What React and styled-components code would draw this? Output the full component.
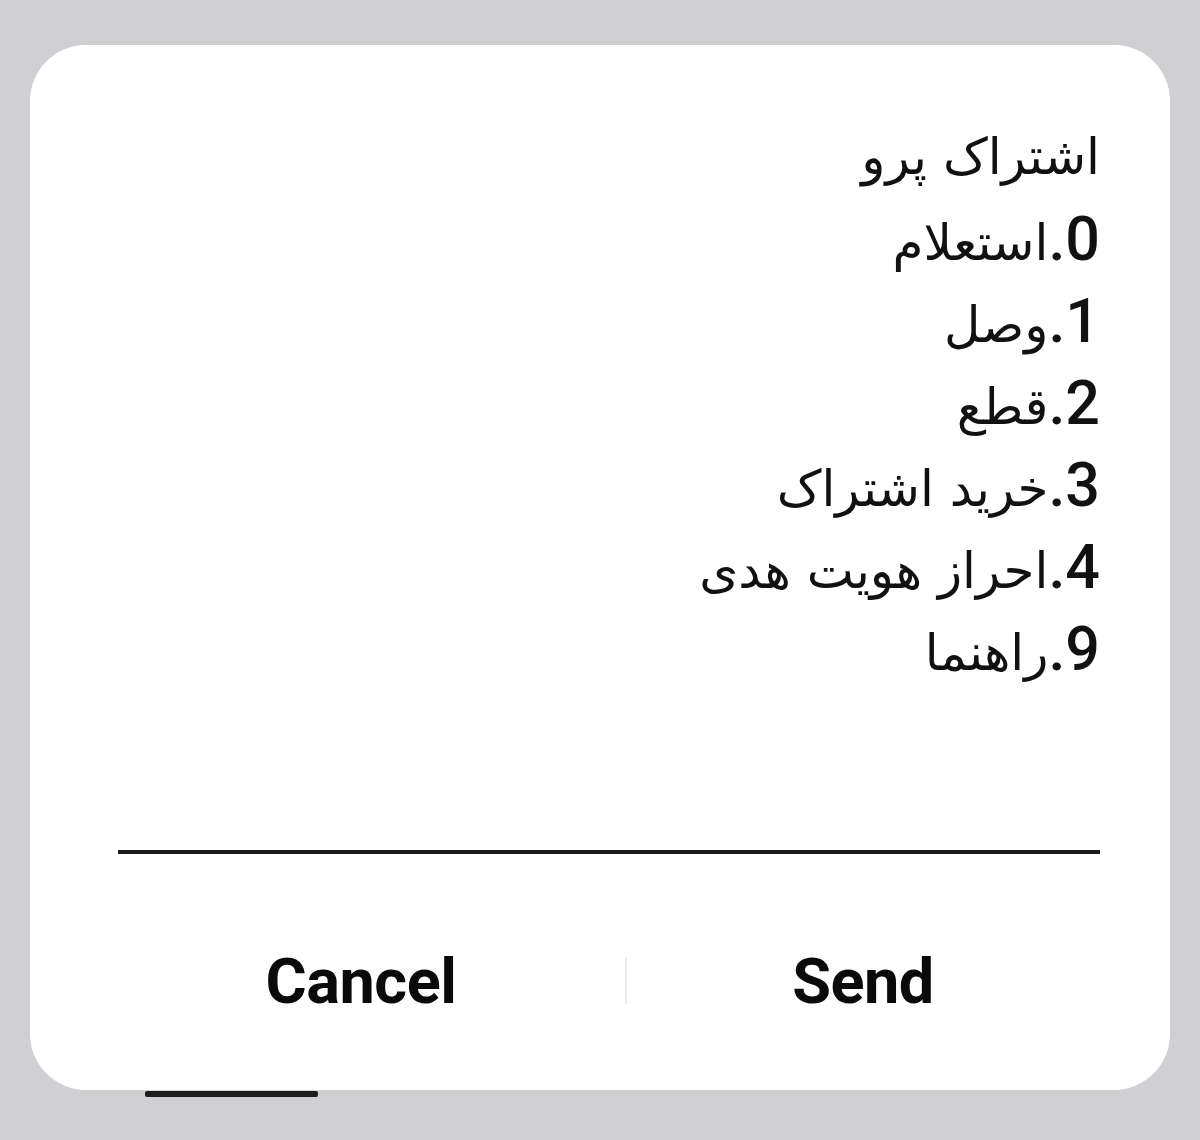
import React from "react";
import styled, { createGlobalStyle } from "styled-components";

const Global = createGlobalStyle`
  html, body { margin: 0; padding: 0; background: #d0d0d2; }
  body { width: 1200px; height: 1140px; overflow: hidden; font-family: Roboto, "DejaVu Sans", sans-serif; }
`;

const Page = styled.div`
  padding: 45px 30px 0 30px;
  height: 1140px;
  box-sizing: border-box;
`;

const Card = styled.div`
  background: #ffffff;
  border-radius: 56px;
  height: 1045px;
  box-sizing: border-box;
  padding: 71px 70px 0 67px;
  display: flex;
  flex-direction: column;
`;

const List = styled.div`
  direction: rtl;
  text-align: right;
  padding-left: 21px;
`;

const Line = styled.div`
  font-family: "DejaVu Sans", sans-serif;
  font-size: 50px;
  line-height: 82px;
  height: 82px;
  color: #111;
  white-space: nowrap;
`;

const Num = styled.span`
  font-family: Roboto, sans-serif;
  font-size: 61px;
  font-weight: 500;
`;

const Rule = styled.div`
  margin: 160px 0 0 21px;
  height: 4px;
  background: #1a1a1a;
`;

const Buttons = styled.div`
  flex: 1;
  display: grid;
  grid-template-columns: 528px 2px 472px;
  align-items: center;
  padding-top: 18px;
`;

const Btn = styled.div`
  text-align: center;
  font-family: Roboto, "Liberation Sans", sans-serif;
  font-weight: 700;
  font-size: 63px;
  color: #0a0a0a;
  letter-spacing: -0.5px;
`;

const Divider = styled.div`
  width: 2px;
  height: 46px;
  background: #ebebeb;
`;

const HomeBar = styled.div`
  width: 173px;
  height: 6px;
  margin: 1px 0 0 115px;
  background: #1d1d1d;
  border-radius: 2px;
`;

const lines = [
  { n: "", t: "اشتراک پرو" },
  { n: "0.", t: "استعلام" },
  { n: "1.", t: "وصل" },
  { n: "2.", t: "قطع" },
  { n: "3.", t: "خرید اشتراک" },
  { n: "4.", t: "احراز هویت هدی" },
  { n: "9.", t: "راهنما" },
];

export default function App() {
  return (
    <>
      <Global />
      <Page>
        <Card>
          <List>
            {lines.map((l) => (
              <Line key={l.t}>
                {l.n && <Num>{l.n}</Num>}
                {l.t}
              </Line>
            ))}
          </List>
          <Rule />
          <Buttons>
            <Btn>Cancel</Btn>
            <Divider />
            <Btn>Send</Btn>
          </Buttons>
        </Card>
        <HomeBar />
      </Page>
    </>
  );
}
